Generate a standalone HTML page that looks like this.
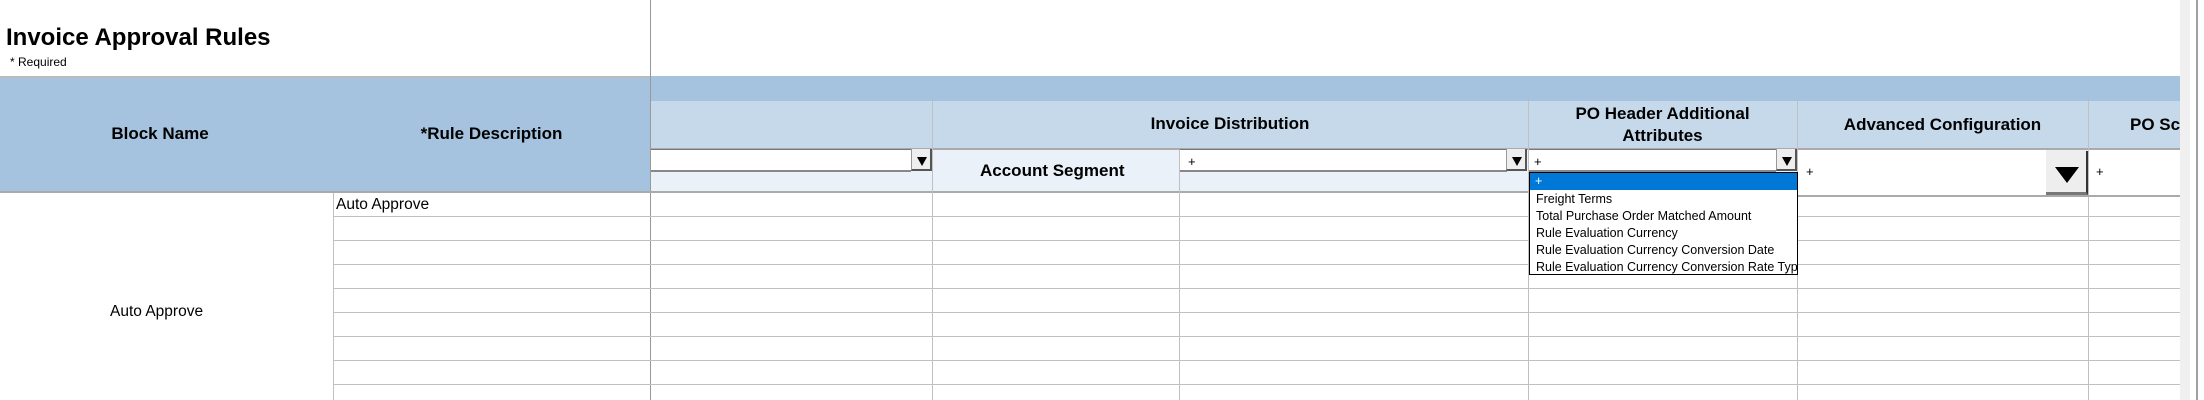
<!DOCTYPE html>
<html><head><meta charset="utf-8"><style>
*{margin:0;padding:0;box-sizing:border-box}
body{width:2204px;height:400px;overflow:hidden;background:#fff;font-family:"Liberation Sans",sans-serif;position:relative;color:#000}
div{position:absolute}
.b{font-weight:bold;font-size:17px;text-align:center}
.vl{width:1px;background:#c0c0c0}
.hl{height:1px;background:#c0c0c0}
.dd{background:#fff;border-top:1px solid #777;border-bottom:2px solid #888;height:23px;font-size:13px;padding:4px 0 0 8px}
.ar{width:21px;height:22px;background:#eee;border-left:1px solid #999;border-right:2px solid #555;border-bottom:2px solid #555}
.ar:after{content:"";position:absolute;left:5px;top:8px;border-left:5px solid transparent;border-right:5px solid transparent;border-top:9px solid #000}
.it{left:6px;font-size:12.5px;white-space:nowrap}
</style></head><body>
<div style="left:6px;top:24px;font-size:24px;font-weight:bold">Invoice Approval Rules</div>
<div style="left:10px;top:55px;font-size:12px">* Required</div>
<div class="vl" style="left:650px;top:0;height:400px;background:#999"></div>

<div style="left:0;top:76px;width:650px;height:116px;background:#a5c2de;border-top:2px solid #bbb"></div>
<div class="b" style="left:0;top:124px;width:320px">Block Name</div>
<div class="b" style="left:333px;top:124px;width:317px">*Rule Description</div>

<div style="left:651px;top:76px;width:1529px;height:25px;background:#a5c2de"></div>
<div style="left:651px;top:101px;width:1529px;height:47px;background:#c5d9ea"></div>
<div style="left:651px;top:148px;width:1529px;height:2px;background:#aaa"></div>
<div style="left:651px;top:150px;width:1529px;height:42px;background:#eaf1f8"></div>
<div style="left:0;top:191px;width:2180px;height:2px;background:#aaa"></div>

<div class="vl" style="left:932px;top:101px;height:299px"></div>
<div class="vl" style="left:1179px;top:150px;height:250px"></div>
<div class="vl" style="left:1528px;top:101px;height:299px"></div>
<div class="vl" style="left:1797px;top:101px;height:299px"></div>
<div class="vl" style="left:2088px;top:101px;height:299px"></div>
<div class="vl" style="left:333px;top:193px;height:207px"></div>

<div class="b" style="left:932px;top:114px;width:596px">Invoice Distribution</div>
<div class="b" style="left:1528px;top:103px;width:269px;line-height:22px">PO Header Additional<br>Attributes</div>
<div class="b" style="left:1797px;top:115px;width:291px">Advanced Configuration</div>
<div class="b" style="left:2096px;top:115px;text-align:left;width:84px;overflow:hidden;white-space:nowrap;padding-left:34px">PO Sc</div>
<div class="b" style="left:980px;top:161px;text-align:left">Account Segment</div>

<div class="dd" style="left:651px;top:149px;width:260px"></div>
<div class="ar" style="left:911px;top:149px"></div>
<div class="dd" style="left:1180px;top:149px;width:327px">+</div>
<div class="ar" style="left:1506px;top:149px"></div>
<div class="dd" style="left:1529px;top:149px;width:247px;padding-left:5px">+</div>
<div class="ar" style="left:1776px;top:149px"></div>

<div style="left:1798px;top:150px;width:248px;height:44px;background:#fff"></div>
<div style="left:1806px;top:164px;font-size:13px">+</div>
<div style="left:2046px;top:151px;width:42px;height:44px;background:#eee;border-right:2px solid #333;border-bottom:3px solid #777"></div>
<div style="left:2055px;top:167px;border-left:12px solid transparent;border-right:12px solid transparent;border-top:16px solid #000"></div>
<div style="left:2089px;top:150px;width:91px;height:44px;background:#fff"></div>
<div style="left:2096px;top:164px;font-size:13px">+</div>
<div style="left:1797px;top:195px;width:383px;height:2px;background:#aaa"></div>

<div class="hl" style="left:333px;top:216px;width:1847px"></div>
<div class="hl" style="left:333px;top:240px;width:1847px"></div>
<div class="hl" style="left:333px;top:264px;width:1847px"></div>
<div class="hl" style="left:333px;top:288px;width:1847px"></div>
<div class="hl" style="left:333px;top:312px;width:1847px"></div>
<div class="hl" style="left:333px;top:336px;width:1847px"></div>
<div class="hl" style="left:333px;top:360px;width:1847px"></div>
<div class="hl" style="left:333px;top:384px;width:1847px"></div>

<div style="left:336px;top:196px;font-size:15.5px">Auto Approve</div>
<div style="left:110px;top:303px;font-size:15.5px">Auto Approve</div>

<div style="left:1529px;top:172px;width:269px;height:103px;background:#fff;border:1px solid #000;overflow:hidden">
<div style="left:0;top:0;width:267px;height:17px;background:#0078d7"></div>
<div class="it" style="top:1px;color:#fff;left:5px">+</div>
<div class="it" style="top:19px">Freight Terms</div>
<div class="it" style="top:36px">Total Purchase Order Matched Amount</div>
<div class="it" style="top:53px">Rule Evaluation Currency</div>
<div class="it" style="top:70px">Rule Evaluation Currency Conversion Date</div>
<div class="it" style="top:87px">Rule Evaluation Currency Conversion Rate Type</div>
</div>

<div style="left:2180px;top:0;width:24px;height:400px;background:#fff"></div>
<div style="left:2180px;top:0;width:10px;height:400px;background:#f0f0f0"></div>
<div style="left:2196px;top:0;width:2px;height:400px;background:#a0a0a0"></div>
</body></html>
